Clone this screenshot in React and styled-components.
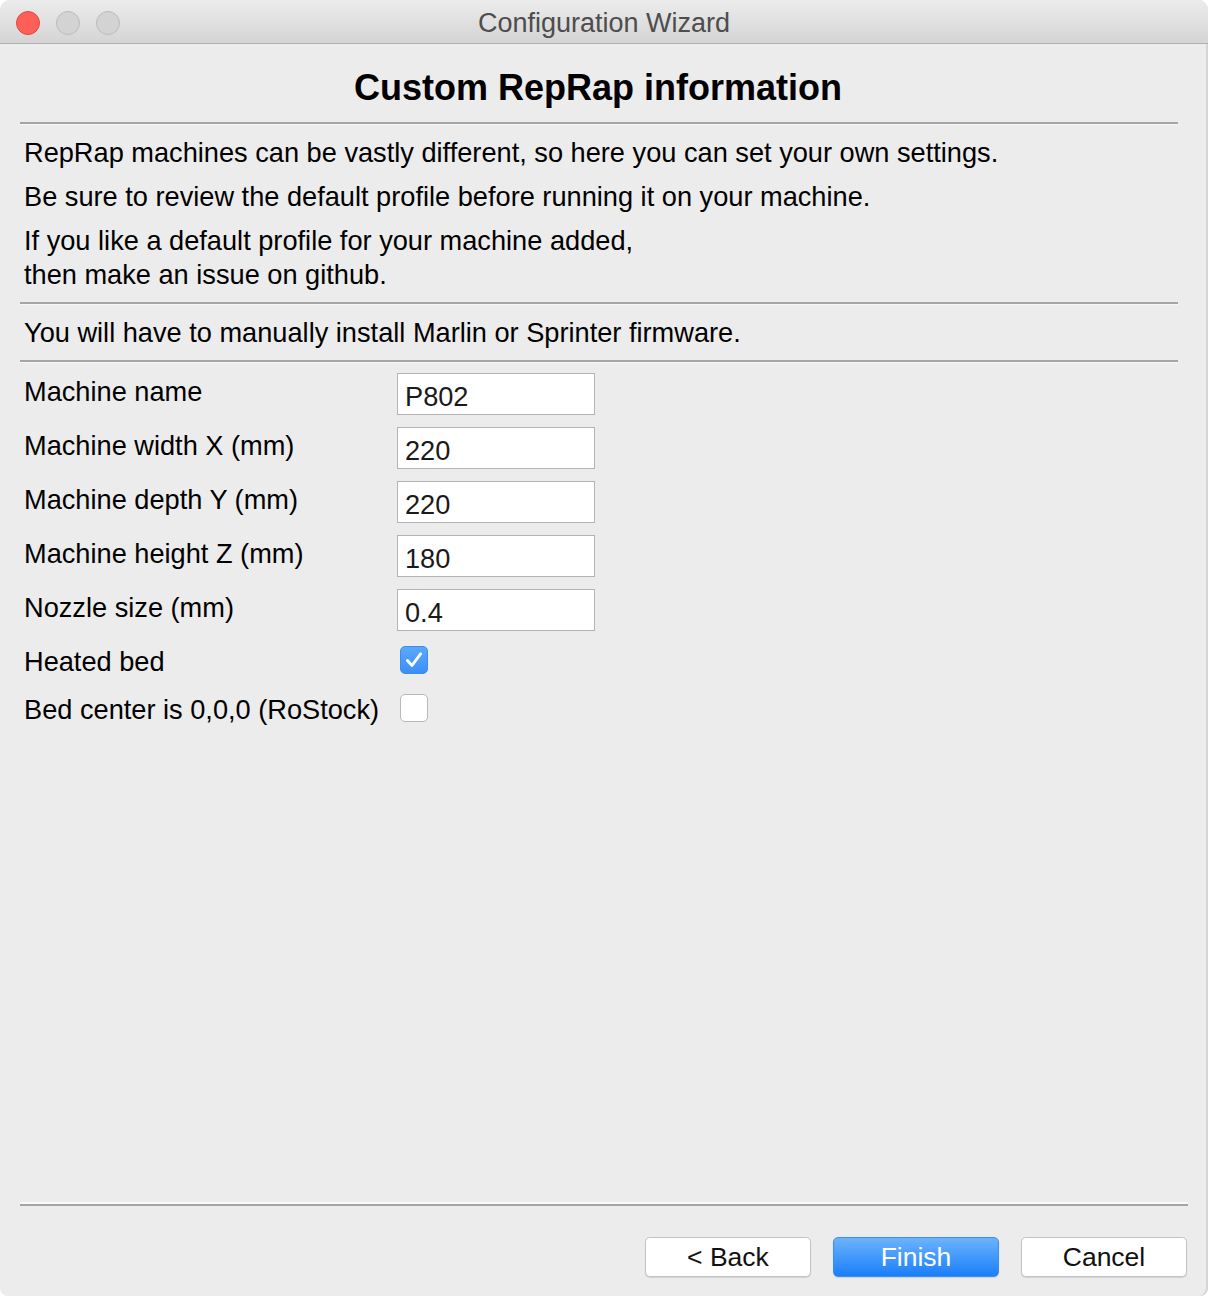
import React from "react";
import styled, { createGlobalStyle } from "styled-components";

const Global = createGlobalStyle`
  html, body { margin: 0; padding: 0; background: #ffffff; }
  body { font-family: "Liberation Sans", Arial, sans-serif; }
  * { box-sizing: border-box; }
`;

const Window = styled.div`
  width: 1208px;
  height: 1296px;
  background: #ececec;
  border-radius: 10px 10px 8px 8px;
  overflow: hidden;
  display: flex;
  flex-direction: column;
  box-shadow: inset -2px 0 0 #d4d4d4;
`;

const TitleBar = styled.div`
  height: 44px;
  flex: none;
  display: grid;
  grid-template-columns: 1fr auto 1fr;
  align-items: center;
  background: linear-gradient(#ececec, #d4d4d4);
  border-bottom: 1px solid #b0b0b0;
  padding: 0 16px;
`;

const Lights = styled.div`
  display: flex;
  gap: 16px;
`;

const Light = styled.span`
  width: 24px;
  height: 24px;
  border-radius: 50%;
  background: ${(p) => (p.$red ? "#fe5f57" : "#d3d3d3")};
  border: 1px solid ${(p) => (p.$red ? "#e2463f" : "#bcbcbc")};
`;

const WinTitle = styled.div`
  font-size: 27px;
  color: #4d4d4d;
  line-height: 44px;
  padding-top: 1px;
`;

const Content = styled.div`
  flex: 1;
  display: flex;
  flex-direction: column;
  padding: 0 30px 0 20px;
`;

const Heading = styled.h1`
  margin: 22px 0 12px;
  font-size: 36px;
  line-height: 44px;
  font-weight: bold;
  text-align: center;
  color: #000;
  padding-right: 2px;
`;

const Sep = styled.div`
  height: 3px;
  flex: none;
  border-top: 2px solid #a5a5a5;
  border-bottom: 1px solid #f7f7f7;
`;

const Para = styled.p`
  margin: ${(p) => p.$mt || 10}px 0 0;
  padding-left: 4px;
  font-size: 27.2px;
  line-height: 34px;
  color: #000;
`;

const ParaBlock = styled.div`
  display: flex;
  flex-direction: column;
  padding-bottom: 10px;
`;

const Form = styled.div`
  margin-top: 10px;
  display: grid;
  grid-template-columns: 377px 198px;
  row-gap: 12px;
  align-items: start;
`;

const Label = styled.div`
  padding: 2px 0 0 4px;
  font-size: 27.2px;
  line-height: 34px;
  color: #000;
  white-space: nowrap;
`;

const Input = styled.input`
  width: 198px;
  height: 42px;
  border: 1px solid #b4b4b4;
  background: #fff;
  font-family: "Liberation Sans", Arial, sans-serif;
  font-size: 27.2px;
  color: #1a1a1a;
  padding: 5px 7px 0;
  margin: 0;
  outline: none;
`;

const Check = styled.span`
  margin: 3px 0 0 3px;
  width: 28px;
  height: 28px;
  border-radius: 5px;
  display: flex;
  align-items: center;
  justify-content: center;
  background: ${(p) => (p.$on ? "linear-gradient(#5aa9fc, #3d8ff6)" : "#fff")};
  border: 1px solid ${(p) => (p.$on ? "#3a8cf2" : "#b8b8b8")};
`;

const Footer = styled.div`
  flex: none;
  height: 94px;
  padding: 0 20px;
  display: flex;
  flex-direction: column;
`;

const FootSep = styled.div`
  height: 4px;
  border-top: 2px solid #fafafa;
  border-bottom: 2px solid #a5a5a5;
`;

const Buttons = styled.div`
  margin-top: 31px;
  display: flex;
  justify-content: flex-end;
  gap: 22px;
  padding-right: 1px;
`;

const Button = styled.button`
  width: 166px;
  height: 40px;
  border-radius: 5px;
  font-family: "Liberation Sans", Arial, sans-serif;
  font-size: 26.5px;
  line-height: 38px;
  padding: 0;
  color: ${(p) => (p.$primary ? "#fff" : "#111")};
  background: ${(p) => (p.$primary ? "linear-gradient(#6db3fb, #1a7ffb)" : "#fff")};
  border: 1px solid ${(p) => (p.$primary ? "#3b8cf5" : "#c4c4c4")};
  box-shadow: 0 1px 1px rgba(0, 0, 0, 0.12);
`;

const fields = [
  ["Machine name", "P802"],
  ["Machine width X (mm)", "220"],
  ["Machine depth Y (mm)", "220"],
  ["Machine height Z (mm)", "180"],
  ["Nozzle size (mm)", "0.4"],
];

export default function App() {
  return (
    <>
      <Global />
      <Window>
        <TitleBar>
          <Lights>
            <Light $red />
            <Light />
            <Light />
          </Lights>
          <WinTitle>Configuration Wizard</WinTitle>
          <span />
        </TitleBar>
        <Content>
          <Heading>Custom RepRap information</Heading>
          <Sep />
          <ParaBlock>
            <Para $mt={11}>
              RepRap machines can be vastly different, so here you can set your own settings.
            </Para>
            <Para>Be sure to review the default profile before running it on your machine.</Para>
            <Para>
              If you like a default profile for your machine added,
              <br />
              then make an issue on github.
            </Para>
          </ParaBlock>
          <Sep />
          <ParaBlock>
            <Para $mt={11}>You will have to manually install Marlin or Sprinter firmware.</Para>
          </ParaBlock>
          <Sep />
          <Form>
            {fields.map(([l, v]) => (
              <React.Fragment key={l}>
                <Label>{l}</Label>
                <Input defaultValue={v} />
              </React.Fragment>
            ))}
            <Label>Heated bed</Label>
            <Check $on>
              <svg width="22" height="22" viewBox="0 0 20 20">
                <path
                  d="M4 10.5 L8.2 15 L16 4.5"
                  fill="none"
                  stroke="#fff"
                  strokeWidth="2.6"
                  strokeLinecap="round"
                  strokeLinejoin="round"
                />
              </svg>
            </Check>
            <Label>Bed center is 0,0,0 (RoStock)</Label>
            <Check />
          </Form>
        </Content>
        <Footer>
          <FootSep />
          <Buttons>
            <Button>&lt; Back</Button>
            <Button $primary>Finish</Button>
            <Button>Cancel</Button>
          </Buttons>
        </Footer>
      </Window>
    </>
  );
}
